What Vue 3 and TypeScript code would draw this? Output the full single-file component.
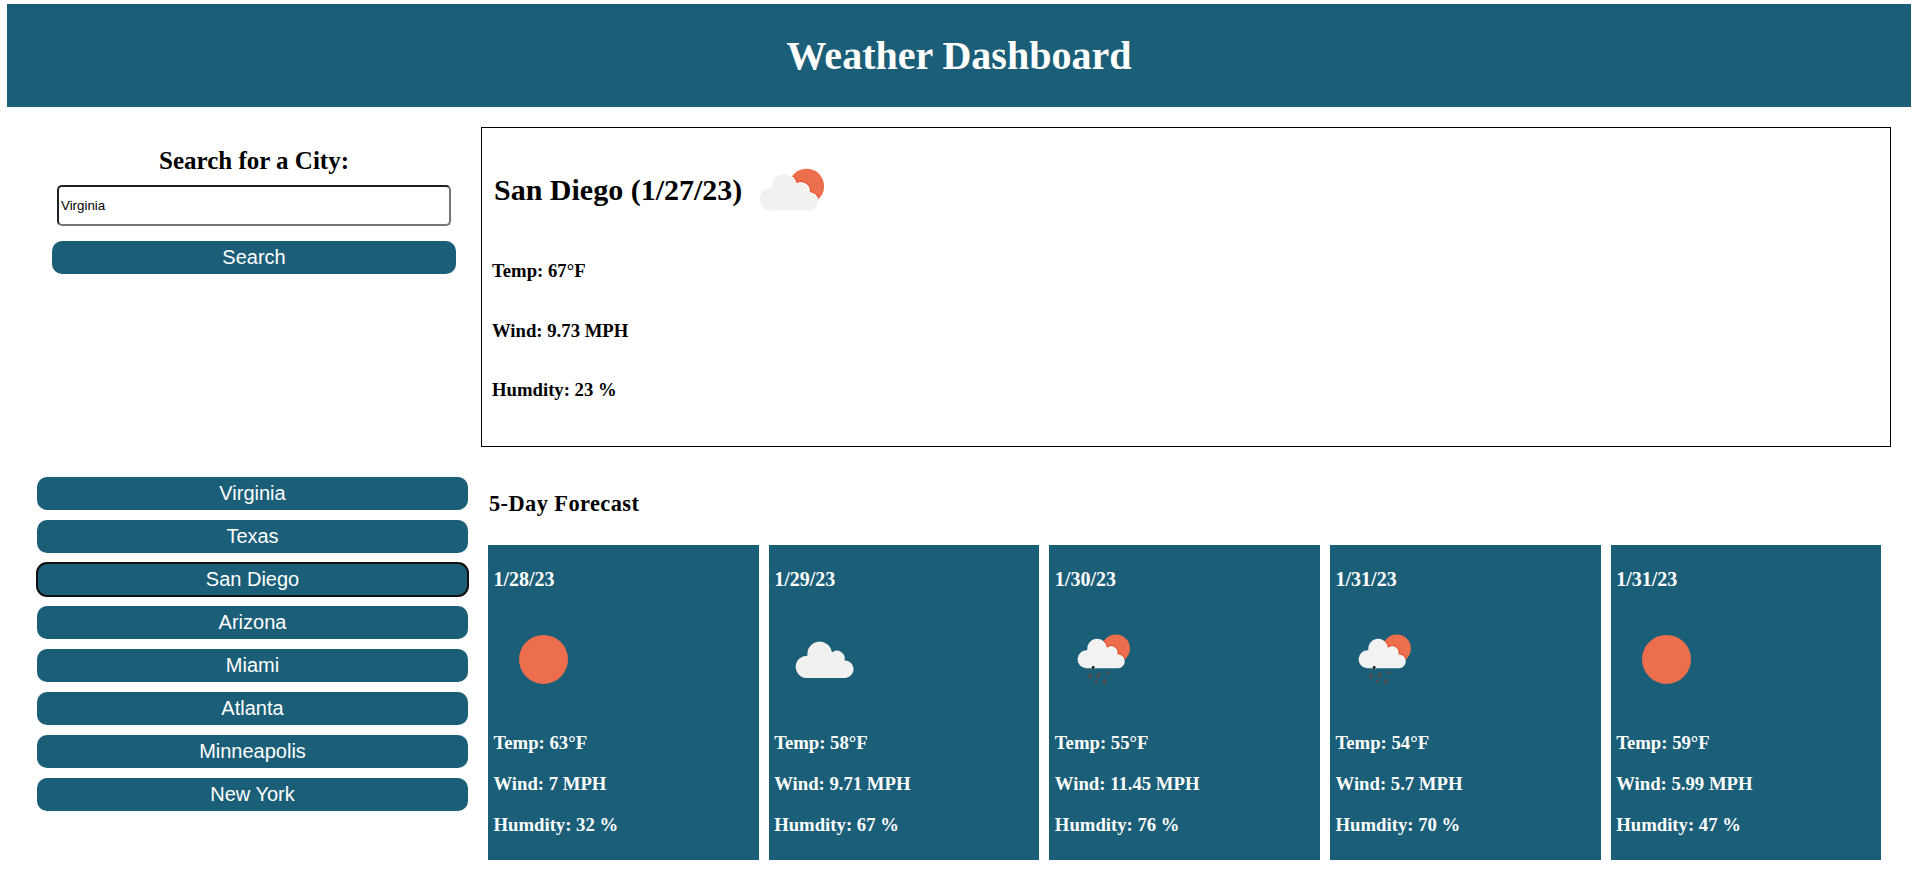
<script setup lang="ts">
import { ref } from 'vue'

type Sky = 'clear' | 'clouds' | 'rain'

interface Day {
  date: string
  sky: Sky
  temp: number
  wind: number
  humidity: number
}

const query = ref('Virginia')
const cities = ['Virginia', 'Texas', 'San Diego', 'Arizona', 'Miami', 'Atlanta', 'Minneapolis', 'New York']
const selected = ref('San Diego')

const days: Day[] = [
  { date: '1/28/23', sky: 'clear', temp: 63, wind: 7, humidity: 32 },
  { date: '1/29/23', sky: 'clouds', temp: 58, wind: 9.71, humidity: 67 },
  { date: '1/30/23', sky: 'rain', temp: 55, wind: 11.45, humidity: 76 },
  { date: '1/31/23', sky: 'rain', temp: 54, wind: 5.7, humidity: 70 },
  { date: '1/31/23', sky: 'clear', temp: 59, wind: 5.99, humidity: 47 },
]

const cloud =
  'M32.1 68.5A11.1 11.1 0 1 1 33.5 46.3A12.3 12.3 0 1 1 57.9 43.2A7.8 7.8 0 0 1 70.5 51.1A8.7 8.7 0 1 1 71.3 68.5Z'
</script>

<template>
  <div class="page">
    <header class="banner"><h1>Weather Dashboard</h1></header>
    <main class="layout">
      <form class="search" @submit.prevent="selected = query">
        <label for="city">Search for a City:</label>
        <input id="city" v-model="query" type="text" />
        <button type="submit" class="btn">Search</button>
      </form>

      <section class="current">
        <div class="current-head">
          <h2>San Diego (1/27/23)</h2>
          <svg class="icon" viewBox="0 0 100 100">
            <defs>
              <clipPath id="sun-now"><circle cx="68.6" cy="44.2" r="17.5" /></clipPath>
            </defs>
            <circle cx="68.6" cy="44.2" r="17.5" fill="#ec6e4c" />
            <g clip-path="url(#sun-now)">
              <path :d="cloud" fill="#fff" stroke="#e8512c" stroke-width="4" />
              <path :d="cloud" fill="#fff" stroke="#fff" stroke-width="2.2" />
            </g>
            <path :d="cloud" fill="#f1f1ef" />
          </svg>
        </div>
        <p>Temp: 67°F</p>
        <p>Wind: 9.73 MPH</p>
        <p>Humdity: 23 %</p>
      </section>

      <nav class="history">
        <button
          v-for="city in cities"
          :key="city"
          type="button"
          class="btn"
          :class="{ active: city === selected }"
          @click="selected = city"
        >{{ city }}</button>
      </nav>

      <section class="forecast">
        <h3>5-Day Forecast</h3>
        <div class="cards">
          <article v-for="(day, i) in days" :key="i" class="card">
            <h4>{{ day.date }}</h4>
            <svg class="icon" viewBox="0 -0.4 100 100">
              <circle v-if="day.sky === 'clear'" cx="50.5" cy="50" r="24.5" fill="#ec6e4c" />
              <path v-else-if="day.sky === 'clouds'" :d="cloud" fill="#f1f1ef" />
              <template v-else>
                <g transform="translate(5.9 3.1) scale(.815)">
                  <defs>
                    <clipPath :id="'sun-' + i"><circle cx="68.6" cy="44.2" r="17.3" /></clipPath>
                  </defs>
                  <circle cx="68.6" cy="44.2" r="17.3" fill="#ec6e4c" />
                  <path :d="cloud" :clip-path="`url(#sun-${i})`" stroke="#e8512c" stroke-width="2.6" />
                  <path :d="cloud" fill="#f2f2f2" />
                </g>
                <circle cx="39" cy="58" r="2" fill="#fff" />
                <g stroke="#4b4a4c" stroke-width="3.2" stroke-linecap="round">
                  <path d="M39.3 57.8L38.9 58.8" stroke="#222" stroke-width="2.8" />
                  <path d="M36.7 65.6L35.7 68" />
                  <path d="M45 64.6L43.9 67" />
                  <path d="M54 63.2V63.4" />
                  <path d="M42.3 71.8V72" />
                  <path d="M51.3 71L50.3 72.8" />
                </g>
              </template>
            </svg>
            <p>Temp: {{ day.temp }}°F</p>
            <p>Wind: {{ day.wind }} MPH</p>
            <p>Humdity: {{ day.humidity }} %</p>
          </article>
        </div>
      </section>
    </main>
  </div>
</template>

<style>
body {
  margin: 0;
  background: #fff;
}
</style>

<style scoped>
.page {
  box-sizing: border-box;
  padding: 4px 4px 0 7px;
  font-family: "Liberation Serif", "Times New Roman", serif;
  font-weight: 700;
  color: #000;
}
h1, h2, h3, h4, p {
  margin: 0;
  font-weight: 700;
}
.banner {
  display: flex;
  align-items: center;
  justify-content: center;
  height: 103px;
  background: #1b5e78;
  color: #fff;
}
h1 {
  font-size: 40px;
  line-height: 45px;
}
.layout {
  display: grid;
  grid-template-columns: 431px 1410px;
  grid-template-rows: 320px auto;
  gap: 30px 13px;
  padding: 20px 20px 0 30px;
}
.search {
  display: flex;
  flex-direction: column;
  padding: 19px 12px 0 15px;
}
.search label {
  font-size: 25px;
  line-height: 29px;
  text-align: center;
}
.search input {
  box-sizing: border-box;
  height: 41px;
  margin: 10px 5px 15px;
  padding: 1px 2px;
  border: 2px inset #767676;
  border-radius: 5px;
  background: #fff;
  color: #000;
  font: 400 13.333px "Liberation Sans", Arial, sans-serif;
  outline: none;
}
.btn {
  height: 33px;
  padding: 0;
  border: 0;
  border-radius: 10px;
  background: #1b5e78;
  color: #fff;
  font: 400 20px "Liberation Sans", Arial, sans-serif;
}
.btn.active {
  outline: 2px solid #101010;
  outline-offset: -1px;
}
.history {
  display: flex;
  flex-direction: column;
  gap: 10px;
}
.icon {
  display: block;
  flex: none;
  width: 100px;
  height: 100px;
}
.current {
  box-sizing: border-box;
  border: 1px solid #000;
  padding: 14px 10px 0;
}
.current-head {
  display: flex;
  align-items: center;
  margin-bottom: -1px;
}
.current h2 {
  padding: 0 0 4px 2px;
  font-size: 30px;
  line-height: 34px;
}
.current .icon {
  margin-left: -4px;
}
.current p {
  font-size: 18.72px;
  line-height: 59.5px;
}
.forecast {
  padding: 0 9.6px 0 7px;
}
.forecast h3 {
  padding: 14px 0 28px 1px;
  font-size: 22.4px;
  line-height: 26px;
  letter-spacing: 0.42px;
}
.cards {
  display: grid;
  grid-template-columns: repeat(5, 1fr);
  gap: 10px;
}
.card {
  box-sizing: border-box;
  height: 315px;
  padding: 22px 5px 0;
  background: #1b5e78;
  color: #fff;
}
.card h4 {
  padding-left: 0.5px;
  font-size: 20px;
  line-height: 24px;
}
.card .icon {
  margin: 18px 0 13px;
}
.card p {
  padding-left: 0.5px;
  font-size: 18.72px;
  line-height: 41px;
}
</style>
